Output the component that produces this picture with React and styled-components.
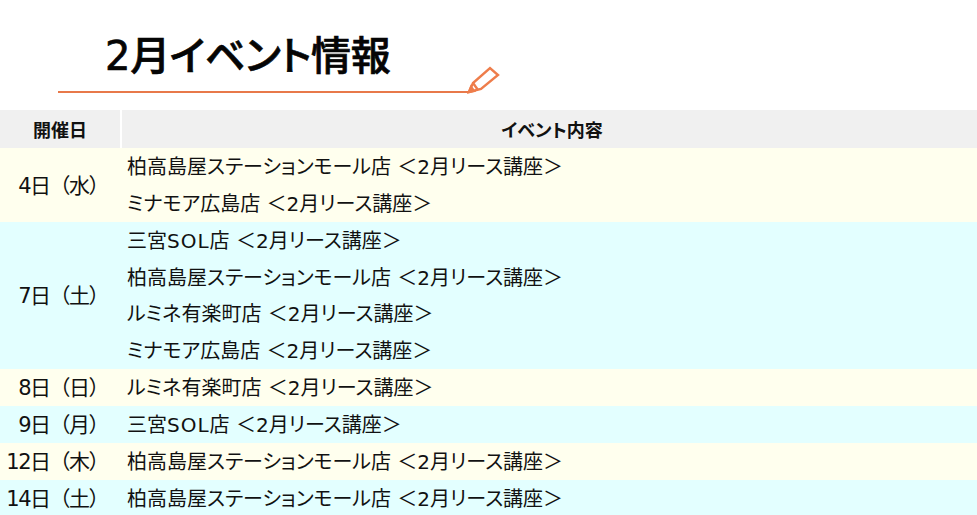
import React from "react";
import styled, { createGlobalStyle } from "styled-components";

const Global = createGlobalStyle`
  html, body { margin: 0; padding: 0; background: #fff; overflow: hidden; }
  body { font-family: "DejaVu Sans", "Noto Sans CJK JP", sans-serif; color: #111; font-feature-settings: "palt"; }
`;
const Page = styled.div`width: 977px; height: 515px; overflow: hidden;`;
const TitleBlock = styled.header`
  position: relative;
  height: 110px;
  margin-left: 58px;
  width: 412px;
`;
const Title = styled.h1`
  margin: 0;
  padding: 29px 0 0 47px;
  height: 62px;
  font-size: 40px;
  line-height: 55px;
  font-weight: 500;
  letter-spacing: -0.3px;
  -webkit-text-stroke: 0.7px #050505;
  color: #050505;
  border-bottom: 2px solid #e8794a;
`;
const Pencil = styled.svg`
  position: absolute;
  left: 408px;
  top: 64px;
`;
const HeadRow = styled.div`
  display: grid;
  grid-template-columns: 120px 1fr;
  column-gap: 2px;
  height: 38px;
`;
const HeadCell = styled.div`
  background: #f0f0f0;
  display: flex;
  align-items: center;
  justify-content: center;
  padding-left: ${p => p.$inset || 0}px;
  font-size: 18px;
  font-weight: 700;
  font-family: "Noto Sans CJK JP", sans-serif;
`;
const Row = styled.div`
  display: grid;
  grid-template-columns: 120px 1fr;
  background: ${p => (p.$alt ? "#e3ffff" : "#ffffee")};
`;
const DateCell = styled.div`
  display: flex;
  align-items: center;
  justify-content: flex-end;
  padding: 0 12px 2px 0;
  font-size: 21px;
  letter-spacing: -1.5px;
  font-feature-settings: normal;
  white-space: pre;
`;
const Events = styled.div`
  padding-left: 7px;
`;
const Event = styled.div`
  height: 36.85px;
  line-height: 36.85px;
  padding-top: 1px;
  box-sizing: border-box;
  font-size: 20px;
  white-space: pre;
`;
const Latin = styled.span`
  letter-spacing: 1px;
`;

const K = "柏高島屋ステーションモール店 ＜2月リース講座＞";
const M = "ミナモア広島店 ＜2月リース講座＞";
const S = <>三宮<Latin>SOL</Latin>店 ＜2月リース講座＞</>;
const L = "ルミネ有楽町店 ＜2月リース講座＞";
const rows = [
  ["4日（水）", [K, M]],
  ["7日（土）", [S, K, L, M]],
  ["8日（日）", [L]],
  ["9日（月）", [S]],
  ["12日（木）", [K]],
  ["14日（土）", [K]],
];

export default function App() {
  return (
    <Page>
      <Global />
      <TitleBlock>
        <Title>2月イベント情報</Title>
        <Pencil width="34" height="32" viewBox="0 0 34 32" fill="none" stroke="#ee7d4b" strokeWidth="2.4">
          <path d="M3 28 L7 19 L24 4 L32 11 L15 25 Z" />
          <path d="M7 19 L12 26" />
          <path d="M3 28 L8 27 L5 23 Z" fill="#ee7d4b" />
        </Pencil>
      </TitleBlock>
      <HeadRow>
        <HeadCell>開催日</HeadCell>
        <HeadCell $inset={5}>イベント内容</HeadCell>
      </HeadRow>
      {rows.map(([d, ev], i) => (
        <Row key={d} $alt={i % 2 === 1}>
          <DateCell>{d}</DateCell>
          <Events>{ev.map((e, j) => <Event key={j}>{e}</Event>)}</Events>
        </Row>
      ))}
    </Page>
  );
}
